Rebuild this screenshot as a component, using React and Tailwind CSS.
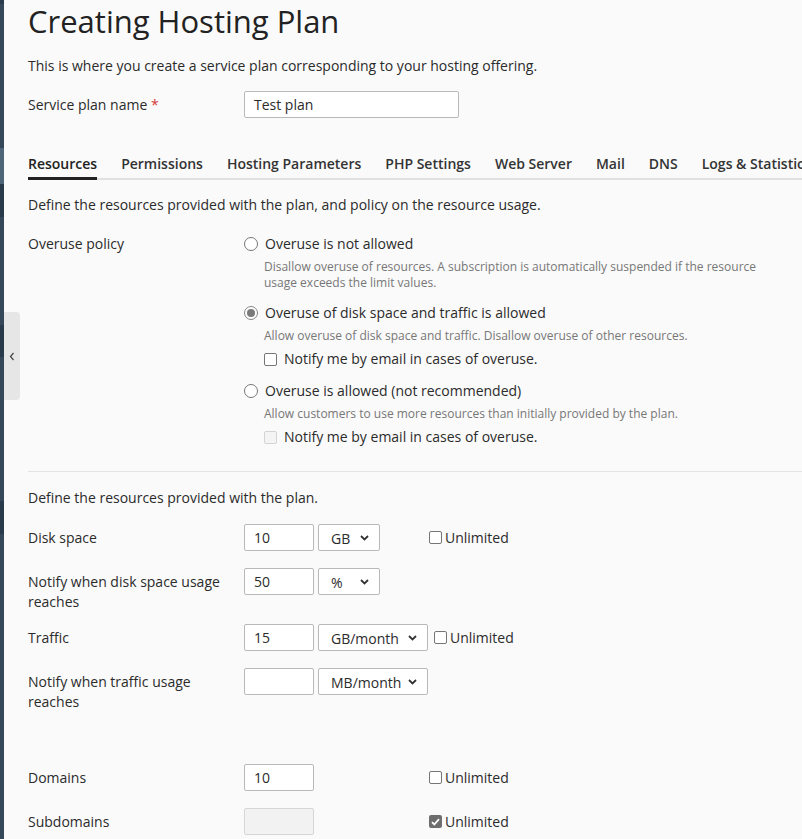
import React from 'react';

const Radio = ({ checked }) => (
  <span
    className={`flex h-[14px] w-[14px] shrink-0 items-center justify-center rounded-full border bg-white ${
      checked ? 'border-[#858585]' : 'border-[#767676]'
    }`}
  >
    {checked && <span className="h-[8px] w-[8px] rounded-full bg-[#7a7a7a]" />}
  </span>
);

const Checkbox = ({ checked, disabled }) => {
  if (checked) {
    return (
      <span className="flex h-[13px] w-[13px] shrink-0 items-center justify-center rounded-[2px] bg-[#6e6e6e]">
        <svg width="9" height="8" viewBox="0 0 9 8">
          <path d="M1 4.2l2.3 2.3L8 1.2" fill="none" stroke="#fff" strokeWidth="1.8" />
        </svg>
      </span>
    );
  }
  return (
    <span
      className={`h-[13px] w-[13px] shrink-0 rounded-[2px] border ${
        disabled ? 'border-[#d4d4d4] bg-[#f4f4f4]' : 'border-[#767676] bg-white'
      }`}
    />
  );
};

const TextInput = ({ value, width = 'w-[70px]', disabled }) => (
  <div
    className={`h-[27px] ${width} rounded-[2px] border px-[9px] text-sm leading-[25px] ${
      disabled ? 'border-[#d6d6d6] bg-[#f2f2f2]' : 'border-[#b9b9b9] bg-white'
    }`}
  >
    {value}
  </div>
);

const Select = ({ value, width }) => (
  <div
    className={`flex h-[27px] ${width} items-center justify-between rounded-[2px] border border-[#b9b9b9] bg-white pl-[12px] pr-[10px] pt-[3px] text-sm`}
  >
    <span>{value}</span>
    <svg width="9" height="6" viewBox="0 0 9 6" className="mb-[2px]">
      <path d="M1 1l3.5 3.5L8 1" fill="none" stroke="#333" strokeWidth="1.8" />
    </svg>
  </div>
);

const Unlimited = ({ checked }) => (
  <label className="flex items-center gap-[3px] text-sm leading-5">
    <Checkbox checked={checked} />
    Unlimited
  </label>
);

const Row = ({ label, className = '', children }) => (
  <div className={`flex items-start ${className}`}>
    <div className="w-[216px] shrink-0 pr-[16px] pt-[4px] text-sm leading-5">{label}</div>
    <div className="flex items-center">{children}</div>
  </div>
);

const tabs = ['Resources', 'Permissions', 'Hosting Parameters', 'PHP Settings', 'Web Server', 'Mail', 'DNS', 'Logs & Statistics'];

const OveruseOption = ({ checked, title, help, notify, notifyDisabled, className = '' }) => (
  <div className={className}>
    <div className="flex items-center gap-[7px] text-sm leading-5">
      <Radio checked={checked} />
      {title}
    </div>
    <div className="ml-[20px] mt-[5px] w-[520px] text-xs leading-4 text-[#777]">{help}</div>
    {notify && (
      <div className="ml-[20px] mt-[5px] flex items-center gap-[7px] text-sm leading-5">
        <Checkbox disabled={notifyDisabled} />
        Notify me by email in cases of overuse.
      </div>
    )}
  </div>
);

export default function App() {
  return (
    <div className="relative flex min-h-screen overflow-hidden bg-[#fafafa] font-['Open_Sans',sans-serif] text-[#2b2b2b]">
      {/* sidebar edge */}
      <div className="flex w-[4px] shrink-0 flex-col bg-[#34485a]">
        <div className="h-[4px] bg-[#2a3b4b]" />
        <div className="h-[144px]" />
        <div className="h-[36px] bg-[#4e6579]" />
        <div className="h-[33px] bg-[#293a4a]" />
        <div className="h-[108px]" />
        <div className="h-[32px] bg-[#293a4a]" />
        <div className="h-[144px]" />
        <div className="h-[33px] bg-[#293a4a]" />
      </div>

      {/* collapse handle */}
      <div className="absolute left-[4px] top-[312px] flex h-[88px] w-[16px] items-center justify-center rounded-r-[4px] bg-[#e6e6e6]">
        <svg width="6" height="9" viewBox="0 0 6 9">
          <path d="M4.5 1L1.5 4.5 4.5 8" fill="none" stroke="#444" strokeWidth="1.2" />
        </svg>
      </div>

      <div className="min-w-0 flex-1 pl-[24px]">
        <h1 className="text-[31px] leading-[42px] text-[#222]">Creating Hosting Plan</h1>
        <p className="mt-[14px] text-sm leading-5">
          This is where you create a service plan corresponding to your hosting offering.
        </p>

        <div className="mt-[15px] flex items-center">
          <div className="w-[216px] pt-[1px] text-sm leading-5">
            Service plan name <span className="text-[#d33c3c]">*</span>
          </div>
          <TextInput value="Test plan" width="w-[215px]" />
        </div>

        {/* tabs */}
        <div className="mt-[36px] flex gap-[24px] whitespace-nowrap border-b-2 border-[#e1e1e1] text-sm font-semibold leading-5 text-[#333]">
          {tabs.map((t, i) => (
            <div
              key={t}
              className={`-mb-[2px] pb-[3px] ${i === 0 ? 'border-b-[3px] border-[#222] text-[#222]' : 'border-b-[3px] border-transparent'}`}
            >
              {t}
            </div>
          ))}
        </div>

        <p className="mt-[15px] text-sm leading-5">
          Define the resources provided with the plan, and policy on the resource usage.
        </p>

        <div className="mt-[19px] flex items-start">
          <div className="w-[216px] shrink-0 text-sm leading-5">Overuse policy</div>
          <div>
            <OveruseOption
              title="Overuse is not allowed"
              help="Disallow overuse of resources. A subscription is automatically suspended if the resource usage exceeds the limit values."
            />
            <OveruseOption
              className="mt-[12px]"
              checked
              title="Overuse of disk space and traffic is allowed"
              help="Allow overuse of disk space and traffic. Disallow overuse of other resources."
              notify
            />
            <OveruseOption
              className="mt-[12px]"
              title="Overuse is allowed (not recommended)"
              help="Allow customers to use more resources than initially provided by the plan."
              notify
              notifyDisabled
            />
          </div>
        </div>

        <div className="mt-[24px] border-t border-[#e3e3e3]" />

        <p className="mt-[16px] text-sm leading-5">Define the resources provided with the plan.</p>

        <div className="mt-[16px]">
          <Row label="Disk space" className="mb-[17px]">
            <div className="mr-[6px] flex min-w-[179px] gap-[4px]">
              <TextInput value="10" />
              <Select value="GB" width="w-[62px]" />
            </div>
            <Unlimited />
          </Row>
          <Row label="Notify when disk space usage reaches" className="mb-[12px]">
            <div className="flex gap-[4px]">
              <TextInput value="50" />
              <Select value="%" width="w-[62px]" />
            </div>
          </Row>
          <Row label="Traffic" className="mb-[17px]">
            <div className="mr-[6px] flex min-w-[179px] gap-[4px]">
              <TextInput value="15" />
              <Select value="GB/month" width="w-[110px]" />
            </div>
            <Unlimited />
          </Row>
          <Row label="Notify when traffic usage reaches" className="mb-[52px]">
            <div className="flex gap-[4px]">
              <TextInput value="" />
              <Select value="MB/month" width="w-[110px]" />
            </div>
          </Row>
          <Row label="Domains" className="mb-[17px]">
            <div className="mr-[6px] min-w-[179px]">
              <TextInput value="10" />
            </div>
            <Unlimited />
          </Row>
          <Row label="Subdomains">
            <div className="mr-[6px] min-w-[179px]">
              <TextInput value="" disabled />
            </div>
            <Unlimited checked />
          </Row>
        </div>
      </div>
    </div>
  );
}
